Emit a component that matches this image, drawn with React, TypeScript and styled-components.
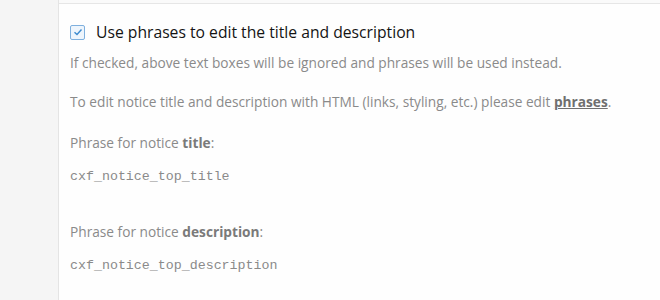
import styled, { createGlobalStyle } from 'styled-components';

const GlobalStyle = createGlobalStyle`
    html, body {
        margin: 0;
        padding: 0;
        background: #fefefe;
    }
    body {
        font-family: "Open Sans", "Liberation Sans", sans-serif;
    }
`;

const App = () => {
    return (
        <Page>
            <GlobalStyle />
            <Sidebar />
            <Main>
                <Panel>
                    <CheckRow>
                        <CheckBox>
                            <svg width="10" height="10" viewBox="0 0 10 10">
                                <path d="M1.5 5.2 L4 7.5 L8.5 2.5" fill="none" stroke="#3d8bcf" strokeWidth="1.4" />
                            </svg>
                        </CheckBox>
                        <CheckLabel>Use phrases to edit the title and description</CheckLabel>
                    </CheckRow>
                    <Hint $top={10}>If checked, above text boxes will be ignored and phrases will be used instead.</Hint>
                    <Hint $top={21}>
                        To edit notice title and description with HTML (links, styling, etc.) please edit{' '}
                        <PhraseLink>phrases</PhraseLink>.
                    </Hint>
                    <Hint $top={23}>
                        Phrase for notice <b>title</b>:
                    </Hint>
                    <Code>cxf_notice_top_title</Code>
                    <Hint $top={38}>
                        Phrase for notice <b>description</b>:
                    </Hint>
                    <Code>cxf_notice_top_description</Code>
                </Panel>
            </Main>
        </Page>
    );
};

const Page = styled.div`
    display: flex;
    width: 660px;
    height: 300px;
    overflow: hidden;
`;

const Sidebar = styled.div`
    width: 58px;
    flex-shrink: 0;
    background: #f5f5f5;
    border-right: 1px solid #e4e4e4;
`;

const Main = styled.div`
    flex: 1;
    padding-top: 3px;
    background: #fafafa;
`;

const Panel = styled.div`
    height: 100%;
    background: #fefefe;
    border-top: 1px solid #e6e6e6;
    padding: 16px 0 0 11px;
`;

const CheckRow = styled.div`
    display: flex;
    align-items: center;
    gap: 11px;
    height: 24px;
`;

const CheckBox = styled.span`
    display: flex;
    align-items: center;
    justify-content: center;
    width: 13px;
    height: 13px;
    border: 1px solid #7fb0de;
    border-radius: 2px;
    background: #eef5fc;
`;

const CheckLabel = styled.span`
    font-size: 15.7px;
    color: #141414;
`;

const Hint = styled.div<{ $top: number }>`
    margin-top: ${(p) => p.$top}px;
    font-size: 13.7px;
    line-height: 18px;
    color: #8a8a8a;

    b {
        font-weight: 700;
        color: #7a7a7a;
    }
`;

const PhraseLink = styled.span`
    font-weight: 700;
    color: #707070;
    text-decoration: underline;
`;

const Code = styled.div`
    margin-top: 17px;
    font-family: "Liberation Mono", monospace;
    font-size: 13.3px;
    line-height: 16px;
    color: #8a8a8a;
`;

export default App;
